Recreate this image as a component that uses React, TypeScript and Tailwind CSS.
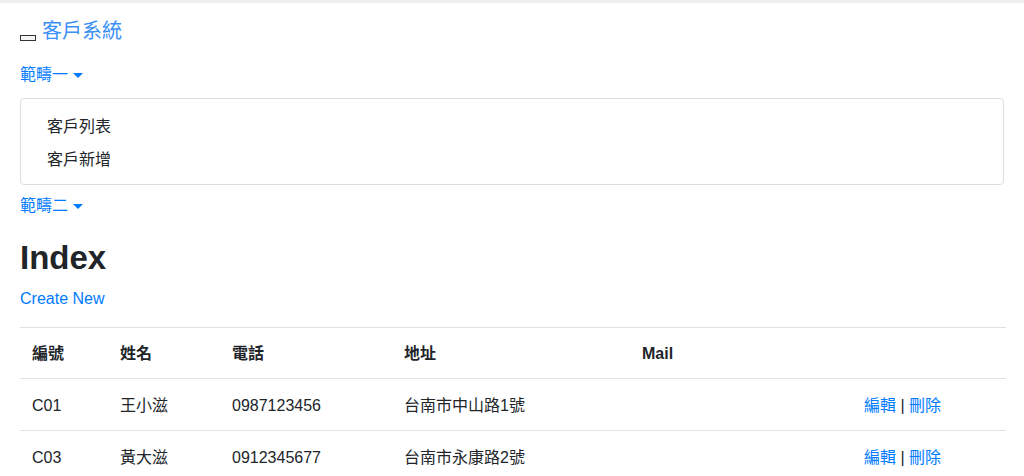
export default function App() {
    const rows = [
        { id: "C01", name: "王小滋", tel: "0987123456", addr: "台南市中山路1號", mail: "" },
        { id: "C03", name: "黃大滋", tel: "0912345677", addr: "台南市永康路2號", mail: "" },
    ]
    const cols = "grid grid-cols-[88px_112px_172px_238px_222px_154px]"

    return (
        <div className="min-h-[476px] bg-white text-[#212529] text-base leading-6 font-['Liberation_Sans','Noto_Sans_CJK_TC',sans-serif]">
            {/* top strip */}
            <div className="h-[3px] w-full bg-[#eeeeee]"></div>

            <div className="px-5">
                {/* brand */}
                <div className="flex items-end h-[40px] pt-[19px]">
                    <span className="block w-[16px] h-[6px] border border-[#333] bg-[#f4f4f4] mb-[2px] mr-[6px]"></span>
                    <a className="text-[20px] leading-[24px] text-[#3a8ff5]">客戶系統</a>
                </div>

                {/* menu 1 */}
                <div className="flex items-center mt-[20px] h-6 text-[#007bff]">
                    範疇一
                    <span className="ml-[5px] mt-[1px] border-x-[5px] border-x-transparent border-t-[5px] border-t-[#007bff]"></span>
                </div>
                <div className="mt-[11px] h-[87px] border border-[#dddddd] rounded pt-[16px] flex flex-col gap-[9px]">
                    <div className="pl-[26px]">客戶列表</div>
                    <div className="pl-[26px]">客戶新增</div>
                </div>

                {/* menu 2 */}
                <div className="flex items-center mt-[9px] h-6 text-[#007bff]">
                    範疇二
                    <span className="ml-[5px] mt-[1px] border-x-[5px] border-x-transparent border-t-[5px] border-t-[#007bff]"></span>
                </div>

                <h1 className="mt-[19px] text-[33px] leading-[42px] font-bold">Index</h1>
                <a className="block mt-[8px] text-[#007bff]">Create New</a>

                {/* table */}
                <div className="mt-[16px] w-[986px] border-t border-[#dee2e6]">
                    <div className={cols + " font-bold border-b border-[#dee2e6]"}>
                        <div className="px-3 pt-[14px] pb-[12px]">編號</div>
                        <div className="px-3 pt-[14px] pb-[12px]">姓名</div>
                        <div className="px-3 pt-[14px] pb-[12px]">電話</div>
                        <div className="px-3 pt-[14px] pb-[12px]">地址</div>
                        <div className="px-3 pt-[14px] pb-[12px]">Mail</div>
                        <div className="px-3 pt-[14px] pb-[12px]"></div>
                    </div>
                    {rows.map((r) => (
                        <div key={r.id} className={cols + " border-b border-[#dee2e6]"}>
                            <div className="px-3 pt-[15px] pb-[12px]">{r.id}</div>
                            <div className="px-3 pt-[15px] pb-[12px]">{r.name}</div>
                            <div className="px-3 pt-[15px] pb-[12px]">{r.tel}</div>
                            <div className="px-3 pt-[15px] pb-[12px]">{r.addr}</div>
                            <div className="px-3 pt-[15px] pb-[12px]">{r.mail}</div>
                            <div className="px-3 pt-[15px] pb-[12px]">
                                <a className="text-[#007bff]">編輯</a> | <a className="text-[#007bff]">刪除</a>
                            </div>
                        </div>
                    ))}
                </div>
            </div>
        </div>
    )
}
